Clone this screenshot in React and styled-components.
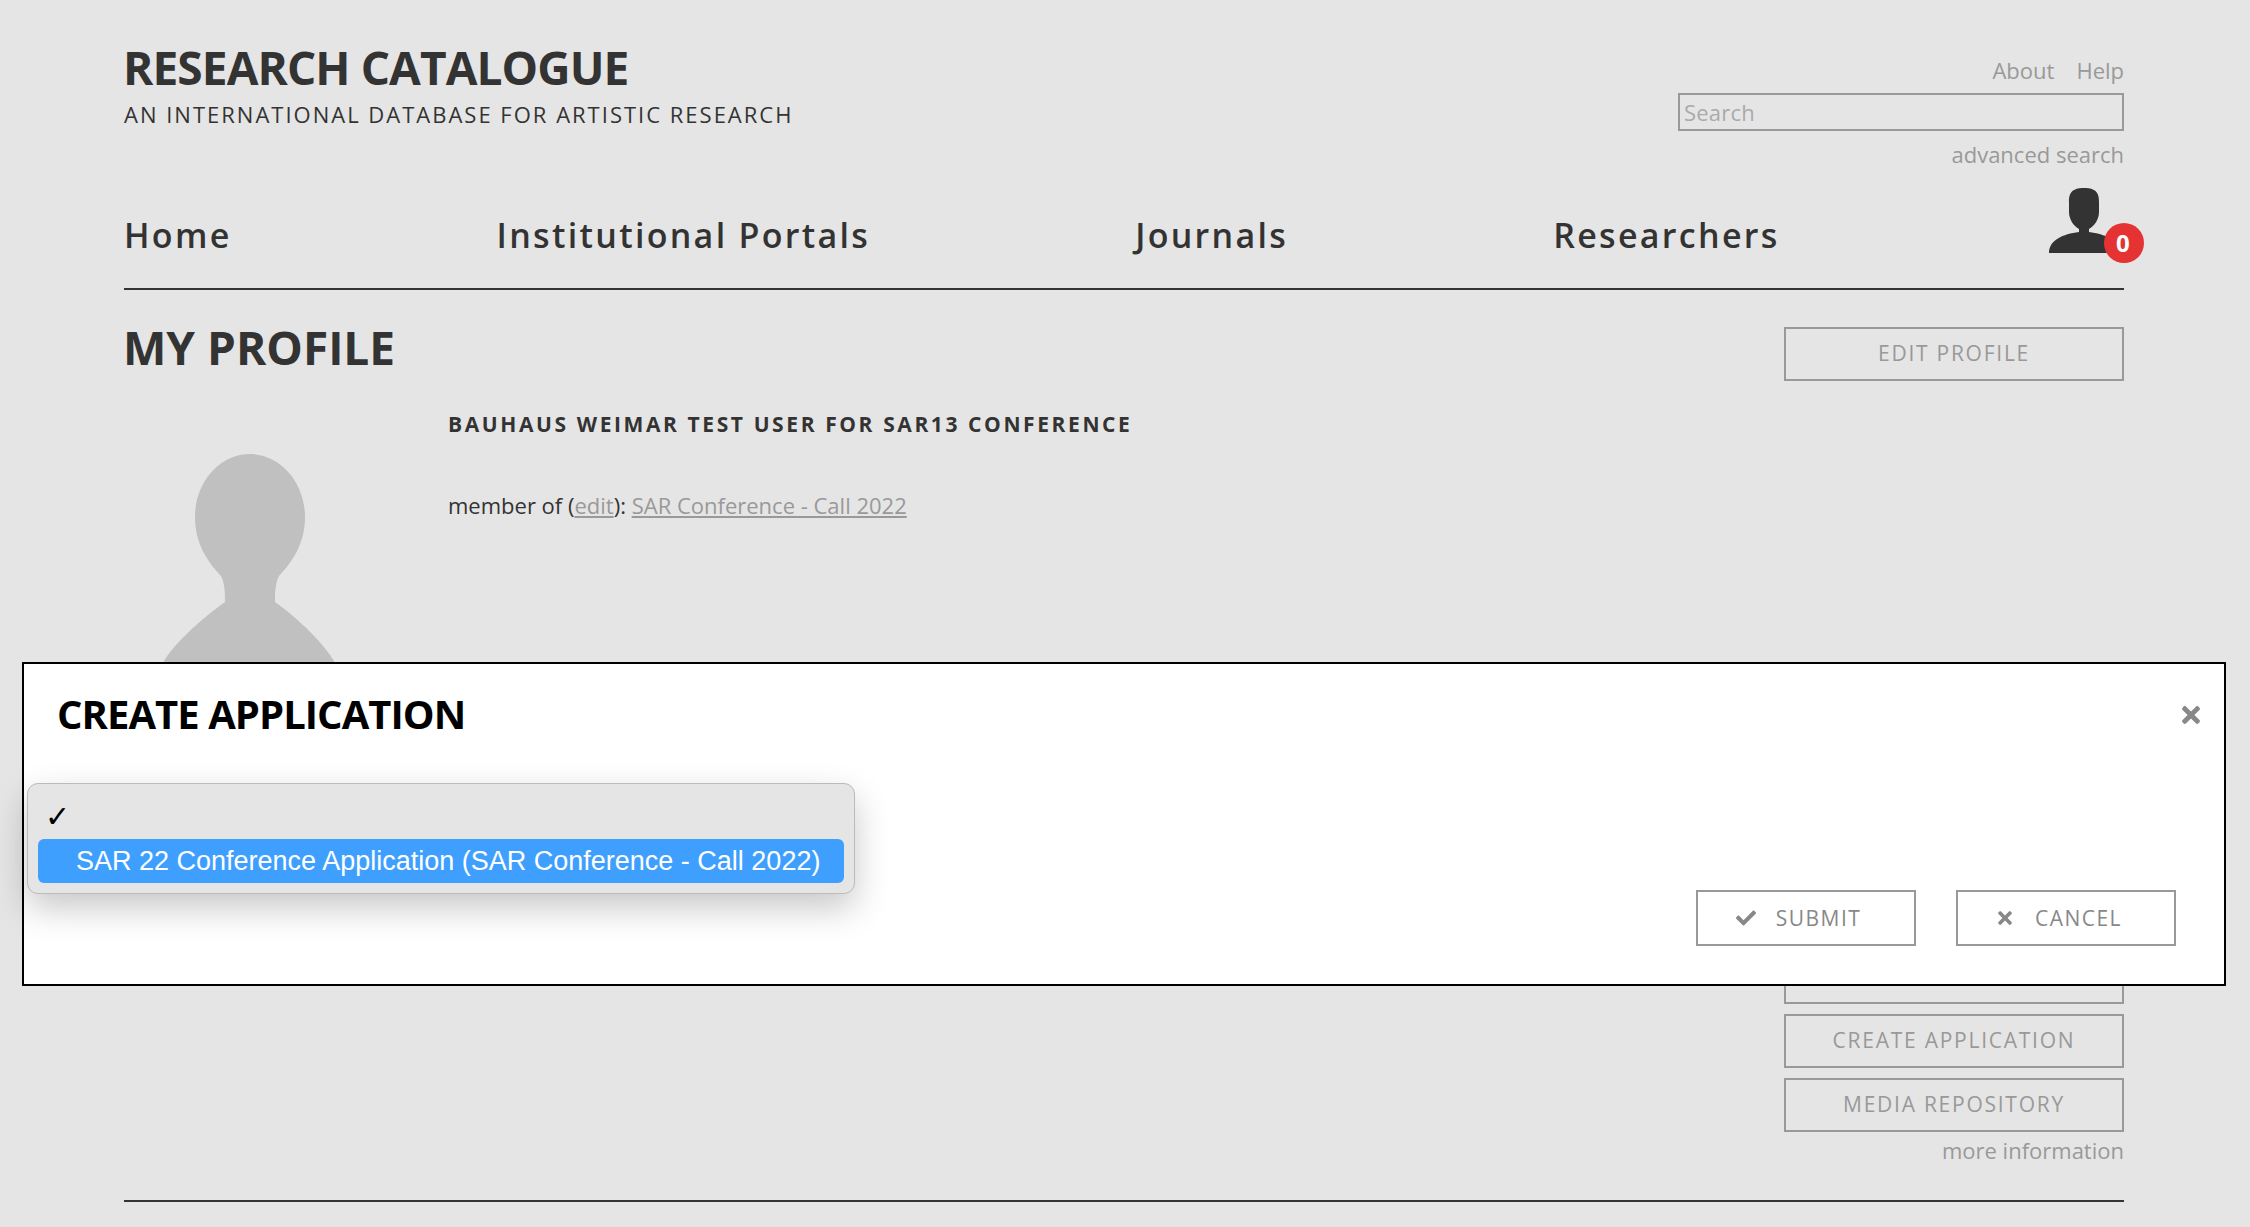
import styled, { createGlobalStyle } from "styled-components";
import { FaCheck, FaTimes } from "react-icons/fa";

const GlobalStyle = createGlobalStyle`
  html, body {
    margin: 0;
    padding: 0;
    background: #e5e5e5;
    font-family: "Open Sans", "Liberation Sans", sans-serif;
  }
`;

const Page = styled.div`
  position: relative;
  width: 2250px;
  height: 1227px;
  padding: 0 126px 0 124px;
  box-sizing: border-box;
  overflow: hidden;
  color: #333;
`;

const Masthead = styled.header`
  display: flex;
  justify-content: space-between;
  height: 170px;
`;

const Brand = styled.div`
  padding-top: 39px;
`;

const SiteTitle = styled.h1`
  margin: 0 0 0 -1px;
  font-size: 46px;
  line-height: 56px;
  font-weight: 700;
  font-stretch: 88%;
  letter-spacing: -0.9px;
`;

const Tagline = styled.div`
  margin-top: 4px;
  font-size: 22px;
  line-height: 30px;
  letter-spacing: 2px;
`;

const SearchBox = styled.div`
  width: 446px;
  padding-top: 55px;
  display: flex;
  flex-direction: column;
  align-items: flex-end;
  color: #999;
  font-size: 22px;
`;

const TopLinks = styled.div`
  display: flex;
  gap: 22px;
  line-height: 30px;
  height: 38px;
`;

const SearchInput = styled.div`
  width: 100%;
  height: 38px;
  box-sizing: border-box;
  border: 2px solid #999;
  padding-left: 4px;
  line-height: 34px;
  letter-spacing: 0.2px;
  color: #aaa;
`;

const AdvancedLink = styled.div`
  margin-top: 8px;
  line-height: 30px;
`;

const NavBar = styled.nav`
  position: relative;
  display: flex;
  gap: 265px;
  height: 120px;
  box-sizing: border-box;
  border-bottom: 2px solid #333;
  padding-top: 42px;
  font-size: 34px;
  line-height: 46px;
  font-weight: 600;
  letter-spacing: 2.3px;
`;

const Bell = styled.div`
  position: absolute;
  right: -20px;
  top: 18px;
  width: 95px;
  height: 72px;
`;

const Badge = styled.span`
  position: absolute;
  right: 0;
  bottom: -3px;
  width: 40px;
  height: 40px;
  border-radius: 50%;
  background: #e53333;
  color: #fff;
  font-size: 24px;
  font-weight: 700;
  line-height: 40px;
  text-align: center;
`;

const Profile = styled.main`
  display: flex;
  height: 912px;
  box-sizing: border-box;
  border-bottom: 2px solid #333;
`;

const ProfileLeft = styled.div`
  flex: 1;
`;

const PageTitle = styled.h2`
  margin: 0 0 0 -1px;
  padding-top: 27px;
  font-size: 46px;
  line-height: 60px;
  font-weight: 700;
  font-stretch: 88%;
`;

const ProfileRow = styled.div`
  display: flex;
  margin-top: 32px;
`;

const AvatarCol = styled.div`
  width: 324px;
  padding: 45px 0 0 40px;
  box-sizing: border-box;
`;

const UserName = styled.div`
  font-size: 21px;
  line-height: 30px;
  font-weight: 700;
  letter-spacing: 2.6px;
`;

const Membership = styled.div`
  margin-top: 51px;
  font-size: 22px;
  line-height: 30px;

  a {
    color: #999;
    text-decoration: underline;
  }
`;

const Actions = styled.aside`
  width: 340px;
  padding-top: 37px;
  display: flex;
  flex-direction: column;
  gap: 10px;
`;

const GhostButton = styled.div`
  height: 54px;
  box-sizing: border-box;
  border: 2px solid #999;
  color: #999;
  font-size: 21px;
  line-height: 48px;
  letter-spacing: 1.75px;
  text-align: center;
  margin-bottom: ${(p) => p.$after || 0}px;
`;

const MoreInfo = styled.div`
  margin-top: -7px;
  color: #999;
  font-size: 22px;
  line-height: 30px;
  text-align: right;
`;

const Modal = styled.section`
  position: absolute;
  left: 22px;
  top: 662px;
  width: 2204px;
  height: 324px;
  box-sizing: border-box;
  border: 2px solid #000;
  background: #fff;
  color: #000;
`;

const ModalTitle = styled.h2`
  margin: 0;
  padding: 24px 0 0 33px;
  font-size: 40px;
  line-height: 52px;
  font-weight: 700;
  font-stretch: 88%;
  letter-spacing: -0.95px;
`;

const CloseIcon = styled.span`
  position: absolute;
  right: 20px;
  top: 38px;
  color: #888;
  font-size: 26px;
  line-height: 1;
`;

const ModalFooter = styled.div`
  position: absolute;
  right: 48px;
  bottom: 38px;
  display: flex;
  gap: 40px;
`;

const ModalButton = styled.div`
  width: 220px;
  height: 56px;
  box-sizing: border-box;
  border: 2px solid #999;
  padding-right: 15px;
  display: flex;
  align-items: center;
  justify-content: center;
  gap: 20px;
  color: #888;
  font-size: 21px;
  letter-spacing: 1.5px;

  svg {
    font-size: 20px;
  }
`;

const SelectMenu = styled.div`
  position: absolute;
  left: 3px;
  top: 119px;
  width: 828px;
  height: 111px;
  box-sizing: border-box;
  padding: 11px 10px;
  border: 1px solid #bbb;
  border-radius: 11px;
  background: #e5e5e5;
  box-shadow: 0 14px 34px rgba(0, 0, 0, 0.22);
  font-family: "Liberation Sans", Arial, sans-serif;
`;

const Tick = styled.div`
  height: 44px;
  padding-left: 7px;
  font-size: 30px;
  line-height: 44px;
  color: #000;
`;

const Option = styled.div`
  height: 44px;
  padding-left: 38px;
  border-radius: 6px;
  background: #3f9fff;
  color: #fff;
  font-size: 27px;
  line-height: 44px;
  white-space: nowrap;
`;

function PersonIcon() {
  return (
    <svg width="70" height="65" viewBox="0 0 70 65">
      <path
        fill="#333"
        d="M35 0C22 0 20 6 20 14V24C20 32 25 38 30 41V44C14 46 0 52 0 65H70C70 52 56 46 40 44V41C45 38 50 32 50 24V14C50 6 48 0 35 0Z"
      />
    </svg>
  );
}

function Silhouette() {
  return (
    <svg width="170" height="260" viewBox="0 0 170 260">
      <path
        fill="#c0c0c0"
        d="M86 0C116 0 141 28 141 63C141 90 128 108 115 122C111 130 111 140 111 148C135 165 160 190 170 207V260H0V207C10 190 37 165 61 148C61 140 61 130 57 122C44 108 31 90 31 63C31 28 56 0 86 0Z"
      />
    </svg>
  );
}

export default function App() {
  return (
    <Page>
      <GlobalStyle />
      <Masthead>
        <Brand>
          <SiteTitle>RESEARCH CATALOGUE</SiteTitle>
          <Tagline>AN INTERNATIONAL DATABASE FOR ARTISTIC RESEARCH</Tagline>
        </Brand>
        <SearchBox>
          <TopLinks>
            <span>About</span>
            <span>Help</span>
          </TopLinks>
          <SearchInput>Search</SearchInput>
          <AdvancedLink>advanced search</AdvancedLink>
        </SearchBox>
      </Masthead>
      <NavBar>
        <span>Home</span>
        <span>Institutional Portals</span>
        <span>Journals</span>
        <span>Researchers</span>
        <Bell>
          <PersonIcon />
          <Badge>0</Badge>
        </Bell>
      </NavBar>
      <Profile>
        <ProfileLeft>
          <PageTitle>MY PROFILE</PageTitle>
          <ProfileRow>
            <AvatarCol>
              <Silhouette />
            </AvatarCol>
            <div>
              <UserName>BAUHAUS WEIMAR TEST USER FOR SAR13 CONFERENCE</UserName>
              <Membership>
                member of (<a>edit</a>): <a>SAR Conference - Call 2022</a>
              </Membership>
            </div>
          </ProfileRow>
        </ProfileLeft>
        <Actions>
          <GhostButton $after={559}>EDIT PROFILE</GhostButton>
          <GhostButton />
          <GhostButton>CREATE APPLICATION</GhostButton>
          <GhostButton>MEDIA REPOSITORY</GhostButton>
          <MoreInfo>more information</MoreInfo>
        </Actions>
      </Profile>
      <Modal>
        <ModalTitle>CREATE APPLICATION</ModalTitle>
        <CloseIcon>
          <FaTimes />
        </CloseIcon>
        <SelectMenu>
          <Tick>✓</Tick>
          <Option>SAR 22 Conference Application (SAR Conference - Call 2022)</Option>
        </SelectMenu>
        <ModalFooter>
          <ModalButton>
            <FaCheck />
            SUBMIT
          </ModalButton>
          <ModalButton>
            <FaTimes />
            CANCEL
          </ModalButton>
        </ModalFooter>
      </Modal>
    </Page>
  );
}
